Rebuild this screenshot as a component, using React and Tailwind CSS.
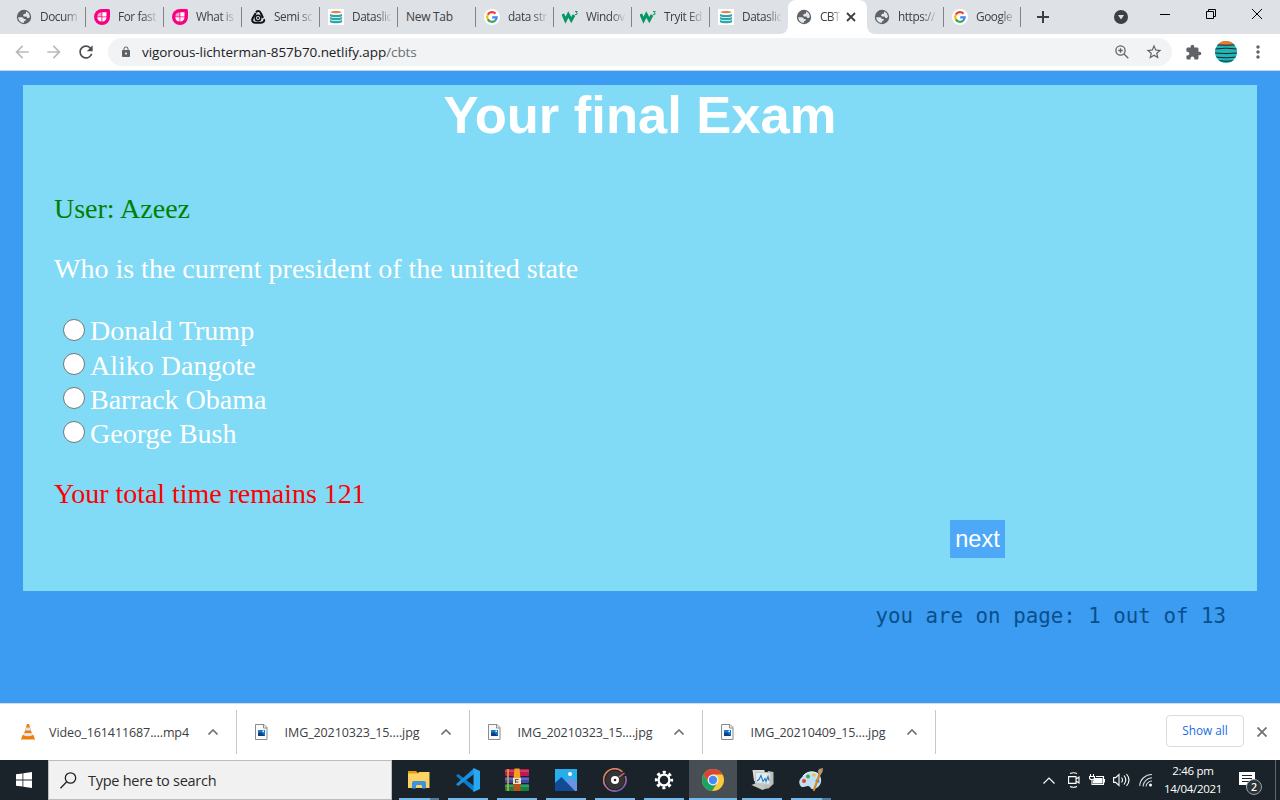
import React from "react";
import { MdLock, MdExtension, MdStarBorder, MdRefresh, MdArrowBack, MdArrowForward, MdMoreVert } from "react-icons/md";

function Globe() {
  return (
    <svg viewBox="0 0 16 16" className="h-4 w-4 shrink-0">
      <circle cx="8" cy="8" r="7.200" fill="#5f6368" />
      <path
        d="M2.200 8.200h3.600c1.300 0 1.900.7 1.900 1.900h2v1.500c-.6.300-1.700.5-1.700 1.300v.9c-3.200.1-5.600-2.300-5.800-5.600zM10 2.600c2.300.8 3.900 3 3.900 5.500-.7.900-1.500 1.200-2.400.8-.6-.4-.4-1.200-1.300-1.500H8.100c-1.200-.2-1.300-2.100 0-2.500.9-.2 1.900.3 1.900-.7z"
        fill="#e4e7ea"
      />
    </svg>
  );
}

function Hash() {
  return (
    <svg viewBox="0 0 16 16" className="h-4 w-4">
      <path d="M8 0h6.500A1.500 1.500 0 0 1 16 1.500V8A8 8 0 0 1 0 8 8 8 0 0 1 8 0z" fill="#f90082" />
      <path d="M8.300 3.300h4.200v4.200H8.300zM3.300 8.300h4.200v4.200C5 12.500 3.300 10.800 3.300 8.300zM8.300 8.300h4.200c0 2.500-1.700 4.200-4.200 4.200z" fill="#fff" />
      <path d="M7.500 3.300v4.200H3.300q.2-3.800 4.200-4.200z" fill="#fba5d2" />
    </svg>
  );
}

function Eye() {
  return (
    <svg viewBox="0 0 16 16" className="h-4 w-4" fill="none" stroke="#111">
      <path d="M6 3.200C8 1.200 10 2 11 4.500L13 9" strokeWidth="2" />
      <path d="M5.800 4L2.800 9C1.500 11.500 2.500 13.500 5 13.700" strokeWidth="2" />
      <path d="M5 13.700h6c2.500 0 3.800-1.500 3-3.500" strokeWidth="2" />
      <circle cx="8" cy="9" r="2.800" strokeWidth="1.500" />
      <circle cx="8" cy="9" r="1.100" fill="#111" stroke="none" />
    </svg>
  );
}

function Stack() {
  return (
    <svg viewBox="0 0 16 16" className="h-4 w-4">
      <path d="M0 0h16v16H0z" fill="#fff" />
      <path d="M2 3c2-1.500 10-1.500 12 0-2 1.800-10 1.800-12 0z" fill="#e2834b" />
      <path d="M2 5c3 1.300 9 1.300 12 0v2.200c-3 1.300-9 1.300-12 0zM2 8c3 1.300 9 1.300 12 0v2.200c-3 1.300-9 1.300-12 0zM2 11c3 1.300 9 1.300 12 0v2.200c-3 1.500-9 1.500-12 0z" fill="#2ba7ab" />
    </svg>
  );
}

function Google() {
  return (
    <svg viewBox="0 0 16 16" className="h-4 w-4">
      <circle cx="8" cy="8" r="8" fill="#fff" />
      <g fill="none" strokeWidth="2.200">
        <path d="M3.800 5.600A4.900 4.900 0 0 1 11.500 4.600" stroke="#ea4335" />
        <path d="M3.800 5.600a4.900 4.900 0 0 0 0 4.800" stroke="#fbbc05" />
        <path d="M3.800 10.400a4.900 4.900 0 0 0 7.400 1.200" stroke="#34a853" />
        <path d="M11.200 11.600A4.600 4.600 0 0 0 12.700 8.300H8.200" stroke="#4285f4" />
      </g>
    </svg>
  );
}

function W3() {
  return (
    <svg viewBox="0 0 16 16" className="h-4 w-4" fill="none" stroke="#059862">
      <path d="M.8 5l2.700 6.200L6.300 5.500l3 5.700L12 6" strokeWidth="2.900" />
      <path d="M13 2.500h2.200l-1 1.300c1.800.2 1.500 2.300-1.300 1.700" strokeWidth="1" />
    </svg>
  );
}

const leftTabs = [
  [Globe, "Docum"],
  [Hash, "For fast"],
  [Hash, "What is"],
  [Eye, "Semi sc"],
  [Stack, "Dataslic"],
  [null, "New Tab"],
  [Google, "data str"],
  [W3, "Windov"],
  [W3, "Tryit Ed"],
  [Stack, "Dataslic"],
];

function Tab({ icon: Icon, label, last, narrow }) {
  return (
    <div className={"flex h-[34px] shrink-0 items-center pl-2 " + (narrow ? "w-[77px]" : "w-[78px]")}>
      {Icon && (
        <span className="mr-2 flex h-4 w-4 items-center justify-center">
          <Icon />
        </span>
      )}
      <span
        className={
          "overflow-hidden whitespace-nowrap text-[#3c4043] " +
          (Icon
            ? "w-[41px] text-[11.8px] tracking-[-0.42px] [mask-image:linear-gradient(to_right,black_60%,transparent_98%)]"
            : "w-[60px] text-[12px] tracking-[-0.3px]")
        }
      >
        {label}
      </span>
      {!last && <span className="ml-auto h-5 w-px shrink-0 bg-[#808387]" />}
    </div>
  );
}

function TabStrip() {
  return (
    <div className="flex h-[34px] bg-[#dee1e6]">
      <div className="flex w-[788px] bg-[#dee1e6] pl-[8px]">
        {leftTabs.map(([icon, label], i) => (
          <Tab key={i} icon={icon} label={label} last={i === leftTabs.length - 1} />
        ))}
      </div>
      <div className="-ml-2 flex w-[95px] bg-[linear-gradient(to_bottom,#dee1e6_50%,#ffffff_50%)]">
        <div className="w-2 rounded-br-lg bg-[#dee1e6]" />
        <div className="flex w-[79px] items-center rounded-t-lg bg-white pl-2">
          <Globe />
          <span className="ml-2 w-[21px] overflow-hidden text-[12px] tracking-[-0.7px] whitespace-nowrap text-[#3c4043] [mask-image:linear-gradient(to_right,black_55%,transparent)]">
            CBT
          </span>
          <svg viewBox="0 0 10 10" className="ml-[5px] h-[10px] w-[10px]">
            <path d="M1 1l8 8M9 1l-8 8" stroke="#3c4043" strokeWidth="1.800" />
          </svg>
        </div>
        <div className="w-2 rounded-bl-lg bg-[#dee1e6]" />
      </div>
      <div className="-ml-[9px] flex">
        <Tab icon={Globe} label="https://" />
        <Tab icon={Google} label="Google" narrow />
      </div>
      <div className="flex flex-1 items-center">
        <svg viewBox="0 0 12 12" className="ml-4 h-3 w-3">
          <path d="M6 0v12M0 6h12" stroke="#3c4043" strokeWidth="2" />
        </svg>
        <svg viewBox="0 0 14 14" className="ml-[65px] h-[14px] w-[14px]">
          <circle cx="7" cy="7" r="7" fill="#3c4043" />
          <path d="M4 5h6l-3 4.500z" fill="#dee1e6" />
        </svg>
        <svg viewBox="0 0 104 12" className="mb-[6px] ml-[32px] h-3 w-[104px]" fill="none" stroke="#000">
          <path d="M0 6.500h10" />
          <path d="M46.500 3.500h7v7h-7zM48.500 3.500v-2h7v7h-2" />
          <path d="M92 1l10 10M102 1L92 11" />
        </svg>
      </div>
    </div>
  );
}

function Toolbar() {
  return (
    <div className="flex h-[37px] items-center border-b border-[#c9d5e2] bg-white text-[#5f6368]">
      <MdArrowBack className="ml-3 h-5 w-5 text-[#b8babd]" />
      <MdArrowForward className="ml-3 h-5 w-5 text-[#b8babd]" />
      <MdRefresh className="ml-[12px] h-5 w-5 text-[#4a4d51]" />
      <div className="ml-3 flex h-7 w-[1064px] items-center rounded-full bg-[#f1f3f4]">
        <MdLock className="ml-3 h-3 w-3" />
        <span className="ml-[10px] text-[13.5px] tracking-[-0.08px] whitespace-nowrap text-[#202124]">
          vigorous-lichterman-857b70.netlify.app<span className="text-[#6b6f73]">/cbts</span>
        </span>
        <svg viewBox="0 0 14 14" className="mr-[16px] ml-auto h-[14px] w-[14px]" fill="none" stroke="#5f6368" strokeWidth="1.300">
          <circle cx="5.500" cy="5.500" r="4.600" />
          <path d="M9 9l4.300 4.300M3.300 5.500h4.400M5.500 3.300v4.400" />
        </svg>
        <MdStarBorder className="mr-[9px] h-[18px] w-[18px]" />
      </div>
      <MdExtension className="ml-[13px] h-[17px] w-[17px]" />
      <svg viewBox="0 0 22 22" className="ml-[13px] h-[22px] w-[22px]">
        <defs>
          <clipPath id="avatar"><circle cx="11" cy="11" r="11" /></clipPath>
        </defs>
        <g clipPath="url(#avatar)">
          <path d="M0 0h22v22H0z" fill="#22b5b8" />
          <path d="M0 0h22v4H0z" fill="#f07826" />
          <path d="M0 3.800q11 .8 22 0M0 8q11-1.600 22 0M0 12q11 1.200 22 0M0 16q11 1.600 22 0M3 19.800q8 .8 16 0" stroke="#16282c" strokeWidth="1" fill="none" />
        </g>
      </svg>
      <MdMoreVert className="ml-[11px] h-5 w-5" />
    </div>
  );
}

const options = ["Donald Trump", "Aliko Dangote", "Barrack Obama", "George Bush"];

function Exam() {
  return (
    <main className="h-[632px] bg-[#3b9cf1] px-[23px] pt-[14px]">
      <section className="h-[506px] bg-[#81daf6] font-['Liberation_Serif',serif] text-[28px] leading-[34px] text-white">
        <h1 className="text-center font-['Liberation_Sans',sans-serif] text-[52.5px] leading-[60px] font-bold">Your final Exam</h1>
        <div className="pl-[31px]">
          <p className="mt-[47px] text-[#008000]">User: Azeez</p>
          <p className="mt-[26px]">Who is the current president of the united state</p>
          <div className="mt-7 pl-[9px]">
            {options.map((name, i) => (
              <label key={name} className="flex h-[34px] items-start gap-[5px]">
                <input type="radio" name="answer" className="mt-[5px] h-[22px] w-[22px] appearance-none rounded-full border border-[#767676] bg-white" />
                <span className={i === 0 ? "" : "pt-px"}>{name}</span>
              </label>
            ))}
          </div>
          <p className="mt-[27px] tracking-[-0.05px] text-[#ff0000]">Your total time remains 121</p>
        </div>
        <button className="mt-[9px] ml-[927px] block h-[38px] w-[55px] bg-[#4da8f7] font-['Liberation_Sans',sans-serif] text-[23.5px] leading-[38px]">
          next
        </button>
      </section>
      <p className="mt-[13px] pr-[31px] text-right font-['DejaVu_Sans_Mono',monospace] text-[20.8px] leading-6 text-[#0b4f8a]">
        you are on page: 1 out of 13
      </p>
    </main>
  );
}

function Cone() {
  return (
    <svg viewBox="0 0 16 16" className="h-4 w-4">
      <path d="M2.500 11h11l1.500 4.500H1z" fill="#ef7d0c" />
      <path d="M7 0h2l3.800 12.200q-4.800 2-9.600 0z" fill="#ef7d0c" />
      <path d="M6 3.500h4l1 3H5zM4.300 9h7.400l.8 2.500q-4.500 1.500-9 0z" fill="#e4e4e4" />
    </svg>
  );
}

function ImageFile() {
  return (
    <svg viewBox="0 0 16 16" className="h-4 w-4">
      <path d="M2.500.5h8.500l3 3v12H2.500z" fill="#fafafa" stroke="#8b8b8b" />
      <path d="M10.500.5v3.500H14" fill="none" stroke="#8b8b8b" />
      <path d="M5 6h7v6H5z" fill="#1579d0" />
      <path d="M5 12V9.500L7.500 8 12 12z" fill="#113d7e" />
      <path d="M9.500 6.500h1.500v1.500H9.500z" fill="#fff" />
    </svg>
  );
}

const downloads = [
  [Cone, "Video_161411687....mp4"],
  [ImageFile, "IMG_20210323_15....jpg"],
  [ImageFile, "IMG_20210323_15....jpg"],
  [ImageFile, "IMG_20210409_15....jpg"],
];

function Downloads() {
  return (
    <div className="flex h-[57px] items-center border-t border-[#d5dde6] bg-white pl-1">
      {downloads.map(([Icon, name], i) => (
        <div key={i} className="flex h-11 w-[233px] items-center border-r border-[#c8c8c8] pl-4">
          <Icon />
          <span className="ml-3 w-[142px] pt-[2px] text-center text-[12.5px] tracking-[-0.1px] whitespace-nowrap text-[#3c4043]">{name}</span>
          <svg viewBox="0 0 10 6" className="ml-[18px] h-[6px] w-[10px]">
            <path d="M.5 5.500L5 1l4.500 4.500" fill="none" stroke="#6e7175" strokeWidth="1.600" />
          </svg>
        </div>
      ))}
      <button className="mb-[2px] ml-[230px] h-8 w-[78px] rounded border border-[#dadce0] text-[11.8px] font-medium text-[#1a6be8]">Show all</button>
      <svg viewBox="0 0 10 10" className="ml-[13px] h-[10px] w-[10px]">
        <path d="M.5.5l9 9M9.500.5l-9 9" stroke="#6e7175" strokeWidth="1.800" />
      </svg>
    </div>
  );
}

function Folder() {
  return (
    <svg viewBox="0 0 24 24" className="h-6 w-6">
      <path d="M1 3h8l2 2h10v4H1z" fill="#e59d0b" />
      <path d="M1 5.500h10l1-1.500h10.500v16H1z" fill="#fdd264" />
      <path d="M5 20.500V15q0-2 2-2h10q2 0 2 2v5.500h-4V18q0-1-1-1h-4q-1 0-1 1v2.500z" fill="#3c93dc" />
    </svg>
  );
}

function Code() {
  return (
    <svg viewBox="0 0 24 24" className="h-6 w-6">
      <path d="M0 7.800L2.200 6l16 12v6z" fill="#0a7dcc" />
      <path d="M0 16.200L2.200 18l16-12V0z" fill="#1b8fdd" />
      <path d="M17.500 0L24 3v18l-6.500 3z" fill="#29a8f2" />
    </svg>
  );
}

function Archive() {
  return (
    <svg viewBox="0 0 24 24" className="h-6 w-6">
      <rect y="1" width="24" height="7" rx="1" fill="#c01848" />
      <rect y="9" width="24" height="6" rx="1" fill="#4247b0" />
      <rect y="16" width="24" height="7" rx="1" fill="#168044" />
      <path d="M0 3h24M0 11h24M0 18h24" stroke="#fff" strokeOpacity=".35" />
      <path d="M3 1v22" stroke="#d2b430" strokeWidth="1.500" />
      <path d="M8.500 16h7v7h-7z" fill="#b4521a" />
      <path d="M9.500.5h5l1 9.500h-7z" fill="#f2a123" />
      <path d="M8 10h8v6H8z" fill="#eee0c5" />
      <path d="M10.500 11.500h3M10.500 14h3M10.500 11v4" stroke="#6a4928" />
    </svg>
  );
}

function Photos() {
  return (
    <svg viewBox="0 0 24 24" className="h-6 w-6">
      <path d="M1 1h22v22H1z" fill="#29aeed" />
      <path d="M12 14l5-5 6 6v8H12z" fill="#6d92e4" />
      <path d="M1 15l6.500-6L21 23H1z" fill="#134a95" />
      <circle cx="16" cy="6" r="2" fill="#fff" />
    </svg>
  );
}

function Groove() {
  return (
    <svg viewBox="0 0 24 24" className="h-6 w-6">
      <defs>
        <linearGradient id="ring" x1="0" y1="0" x2=".6" y2="1">
          <stop offset="0" stopColor="#f78a3c" />
          <stop offset=".5" stopColor="#d2777c" />
          <stop offset="1" stopColor="#8064bb" />
        </linearGradient>
      </defs>
      <circle cx="12" cy="12" r="9.500" fill="#363337" />
      <path d="M19.500 3.800A11.200 11.200 0 1 0 22.300 8" fill="none" stroke="url(#ring)" strokeWidth="1.600" />
      <path d="M16 9l5.500-4" stroke="#ce7065" strokeWidth="1.500" />
      <circle cx="12" cy="12" r="4" fill="#fff" />
      <circle cx="12" cy="12" r="1.300" fill="#2c2b2e" />
    </svg>
  );
}

function Gear() {
  return (
    <svg viewBox="0 0 24 24" className="h-6 w-6" fill="none" stroke="#fff">
      <circle cx="12" cy="12" r="5.400" strokeWidth="2.300" />
      <circle cx="12" cy="12" r="7.700" strokeWidth="2.900" strokeDasharray="3.024 3.024" strokeDashoffset="1.500" />
    </svg>
  );
}

function Chrome() {
  return (
    <svg viewBox="0 0 24 24" className="h-6 w-6">
      <circle cx="12" cy="12" r="11" fill="#f9ca3e" />
      <path d="M2.470 6.500A11 11 0 0 1 21.530 6.500H12L7.500 14.500z" fill="#da4437" />
      <path d="M2.470 6.500A11 11 0 0 0 11 22.950L16.500 14.500 12 17 7.500 14.500z" fill="#1ba160" />
      <circle cx="12" cy="12" r="5.400" fill="#f5f5f5" />
      <circle cx="12" cy="12" r="4.200" fill="#4688f4" />
    </svg>
  );
}

function Monitor() {
  return (
    <svg viewBox="0 0 24 24" className="h-6 w-6">
      <path d="M2.500 2h12l1 11H4z" fill="#dedede" />
      <path d="M1.500 17l6-2.500h6l5 5-6 2.500z" fill="#c4c4c2" />
      <path d="M18 3l5.500 1v12l-5 4.500h-5z" fill="#bbbcb8" />
      <path d="M5.500 4l15 1-1 11.500-14-1.500z" fill="#e3edf4" stroke="#c9c9c7" strokeWidth="1.300" />
      <path d="M7 13l2-1.500 2-4 2 6 2-3 1 3 2-5 1 4" fill="none" stroke="#2c7ec0" strokeWidth="1.200" />
    </svg>
  );
}

function Paint() {
  return (
    <svg viewBox="0 0 24 24" className="h-6 w-6">
      <path d="M4 8c5-6 14-5 17 0s0 12-6 13c-4 1-3-3-6-3s-6 3-8-1 0-6 3-9z" fill="#c1dff3" />
      <path d="M4 8c5-6 14-5 17 0" fill="none" stroke="#eef9ff" />
      <circle cx="5" cy="13" r="2" fill="#ea4030" />
      <circle cx="9" cy="8.500" r="2" fill="#3ca855" />
      <circle cx="15" cy="7" r="1.800" fill="#f1c039" />
      <circle cx="18.500" cy="13" r="2" fill="#3c7fd3" />
      <path d="M21 5l-6 17" stroke="#d98524" strokeWidth="2.200" strokeLinecap="round" />
      <path d="M18.500 4l1.500-3 4-1-.5 4-2 3z" fill="#ba9472" />
    </svg>
  );
}

const apps = [Folder, Code, Archive, Photos, Groove, Gear, Chrome, Monitor, Paint];

function Taskbar() {
  return (
    <div className="flex h-10 bg-[#192329]">
      <div className="flex w-12 items-center justify-center">
        <svg viewBox="0 0 16 16" className="h-4 w-4" fill="#fff">
          <path d="M0 2.300l6.500-.9v6.100H0zM7.300 1.300L16 0v7.500H7.300zM0 8.400h6.500v6.200L0 13.700zM7.300 8.400H16V16l-8.700-1.300z" />
        </svg>
      </div>
      <div className="flex w-[344px] items-center border border-[#bdbdbd] bg-[#f1f1f1]">
        <svg viewBox="0 0 17 17" className="ml-[11px] h-[17px] w-[17px]" fill="none" stroke="#222" strokeWidth="1.300">
          <circle cx="10.500" cy="6" r="5.200" />
          <path d="M6.700 9.700L.5 16.300" />
        </svg>
        <span className="ml-[11px] pt-px text-[14.5px] tracking-[-0.27px] whitespace-nowrap text-[#2b2b2b]">Type here to search</span>
      </div>
      <div className="ml-[3px] flex gap-px">
        {apps.map((Icon, i) => (
          <div key={i} className={"flex w-12 flex-col items-center " + (Icon === Chrome ? "bg-[#474e54]" : "")}>
            <span className="mt-2"><Icon /></span>
            <span className={"mt-auto flex h-[2px] justify-end bg-[#76b9ed] " + (Icon === Chrome ? "w-12" : "w-10")}>
              {(i === 0 || i === 8) && <span className="h-full w-[9px] bg-[#507fa5]" />}
            </span>
          </div>
        ))}
      </div>
      <div className="ml-auto flex items-center text-white">
        <svg viewBox="0 0 12 7" className="h-[7px] w-3" fill="none" stroke="#fff" strokeWidth="1.200">
          <path d="M.5 6.500L6 1l5.500 5.500" />
        </svg>
        <svg viewBox="0 0 12 16" className="ml-[13px] h-4 w-3" fill="none" stroke="#fff" strokeWidth="1.100">
          <path d="M.6 4.600h7.400v6.800H.6zM8 7l3-2v6L8 9M2 1.600q3.500-1.600 7 0M2 14.400q3.500 1.600 7 0" />
        </svg>
        <svg viewBox="0 0 16 12" className="ml-[9px] h-3 w-4" fill="none" stroke="#fff" strokeWidth="1.100">
          <path d="M1.500 0v2.500M4.500 0v2.500M.5 2.500h5v2q-2.500 2.500-5 0zM3 6v4.500h11.500v-8H7M14.500 5.500h1v2.500h-1" />
          <path d="M6 4.500h7v4.500H4.500V7.500z" fill="#fff" />
        </svg>
        <svg viewBox="0 0 17 14" className="ml-2 h-[14px] w-[17px]" fill="none" stroke="#fff" strokeWidth="1.100">
          <path d="M.6 4.600h2L6 1.500v11L2.600 9.400h-2zM8.500 4.500q2 2.500 0 5M11 2.500q3.500 4.500 0 9M13.500 1q5 6 0 12" />
        </svg>
        <svg viewBox="0 0 14 14" className="ml-[9px] h-[14px] w-[14px]" fill="none" stroke="#d7dbdd" strokeWidth="1.100">
          <path d="M.7 13A12 12 0 0 1 13 1.500M4 13.500A9.300 9.300 0 0 1 13 4.800M7 13.500A6 6 0 0 1 13 8" />
          <circle cx="11.500" cy="12" r="1.500" fill="#fff" stroke="none" />
        </svg>
        <div className="ml-[10px] w-[60px] text-center text-[11.5px] leading-[18px] tracking-[-0.3px] whitespace-nowrap">
          <div>2:46 pm</div>
          <div>14/04/2021</div>
        </div>
        <div className="relative ml-[16px] h-6 w-6 pt-1">
          <svg viewBox="0 0 16 16" className="h-4 w-4">
            <path d="M0 0h16v13h-6l-3 3v-3H0z" fill="#fff" />
            <path d="M3 3.500h10M3 6.500h10M3 9.500h7" stroke="#192329" />
          </svg>
          <span className="absolute top-[11px] left-[7px] flex h-4 w-4 items-center justify-center rounded-full border border-[#9aa0a3] bg-[#2b3439] text-[10.5px] leading-none font-semibold">2</span>
        </div>
        <div className="ml-[12px] h-10 w-px bg-[#5f676c]" />
        <div className="w-1" />
      </div>
    </div>
  );
}

export default function App() {
  return (
    <div className="h-[800px] w-[1280px] overflow-hidden font-['Open_Sans','Noto_Sans',sans-serif]">
      <TabStrip />
      <Toolbar />
      <Exam />
      <Downloads />
      <Taskbar />
    </div>
  );
}
